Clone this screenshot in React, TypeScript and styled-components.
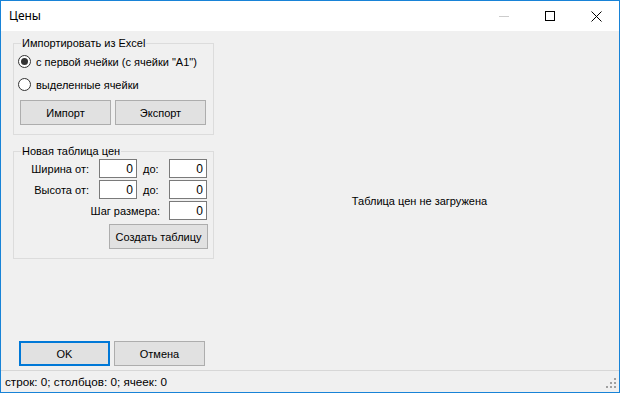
import React from "react";
import styled, { createGlobalStyle } from "styled-components";

const GlobalStyle = createGlobalStyle`
  html, body {
    margin: 0;
    padding: 0;
    background: #ffffff;
  }
  * {
    box-sizing: border-box;
  }
`;

const Window = styled.div`
  width: 620px;
  height: 393px;
  display: flex;
  flex-direction: column;
  border: 1px solid #1883d7;
  background: #f0f0f0;
  font-family: "Liberation Sans", Arial, sans-serif;
  font-size: 11px;
  color: #000;
`;

const TitleBar = styled.div`
  height: 30px;
  flex-shrink: 0;
  display: flex;
  align-items: center;
  background: #ffffff;
`;

const Caption = styled.div`
  flex: 1;
  padding-left: 8px;
  font-family: "Noto Sans", "Liberation Sans", sans-serif;
  font-size: 12px;
  line-height: 16px;
`;

const CaptionButton = styled.div`
  width: 46px;
  height: 30px;
  display: flex;
  align-items: center;
  justify-content: center;
`;

const Client = styled.div`
  flex: 1;
  display: flex;
  min-height: 0;
`;

const LeftColumn = styled.div`
  width: 219px;
  flex-shrink: 0;
  display: flex;
  flex-direction: column;
  padding: 12px 0 0 12px;
`;

const GroupBox = styled.div<{ $gap?: number }>`
  width: 201px;
  border: 1px solid #dcdcdc;
  display: flex;
  flex-direction: column;
  margin-top: ${({ $gap }) => $gap ?? 0}px;
`;

const GroupTitle = styled.div`
  align-self: flex-start;
  margin: -7px 0 0 7px;
  padding: 0 1px;
  line-height: 13px;
  background: #f0f0f0;
`;

const RadioRow = styled.label`
  height: 23px;
  display: flex;
  align-items: center;
  padding-left: 4px;
  gap: 5px;
`;

const RadioCircle = styled.span<{ $checked?: boolean }>`
  width: 13px;
  height: 13px;
  border-radius: 50%;
  border: 1px solid #333333;
  background: #ffffff;
  display: flex;
  align-items: center;
  justify-content: center;

  &::after {
    content: "";
    width: 7px;
    height: 7px;
    border-radius: 50%;
    background: ${({ $checked }) => ($checked ? "#333333" : "transparent")};
  }
`;

const ButtonRow = styled.div<{ $top?: number; $bottom?: number }>`
  display: flex;
  gap: 4px;
  padding-left: 6px;
  margin-top: ${({ $top }) => $top ?? 0}px;
  margin-bottom: ${({ $bottom }) => $bottom ?? 0}px;
`;

const Button = styled.button<{ $width?: number; $default?: boolean }>`
  width: ${({ $width }) => $width ?? 91}px;
  height: 25px;
  padding: 0;
  margin: 0;
  background: #e1e1e1;
  border: ${({ $default }) => ($default ? "2px solid #0078d7" : "1px solid #adadad")};
  font-family: "Liberation Sans", Arial, sans-serif;
  font-size: 11px;
  color: #000;
`;

const FieldGrid = styled.div`
  display: grid;
  grid-template-columns: 85px 38px 32px 38px;
  grid-auto-rows: 19px;
  row-gap: 2px;
  margin-top: 1px;
  align-items: center;
`;

const FieldLabel = styled.span<{ $span?: number; $right?: number }>`
  grid-column: ${({ $span }) => ($span ? `span ${$span}` : "auto")};
  text-align: ${({ $right }) => ($right !== undefined ? "right" : "left")};
  padding-right: ${({ $right }) => $right ?? 0}px;
  padding-left: ${({ $right }) => ($right !== undefined ? 0 : 6)}px;
  white-space: nowrap;
`;

const TextBox = styled.div`
  height: 19px;
  border: 1px solid #7a7a7a;
  background: #ffffff;
  display: flex;
  align-items: center;
  justify-content: flex-end;
  padding-right: 3px;
  font-size: 12px;
`;

const CreateRow = styled.div`
  display: flex;
  justify-content: flex-end;
  padding: 4px 5px 9px 0;
`;

const BottomButtons = styled(ButtonRow)`
  margin-top: auto;
`;

const RightPanel = styled.div`
  flex: 1;
  display: flex;
  align-items: center;
  justify-content: center;
  padding-top: 1px;
`;

const StatusBar = styled.div`
  height: 22px;
  flex-shrink: 0;
  display: flex;
  align-items: center;
  justify-content: space-between;
  border-top: 1px solid #d7d7d7;
  padding-left: 4px;
  font-size: 11.7px;
`;

const Grip = () => (
  <svg width="14" height="14" viewBox="0 0 14 14" style={{ alignSelf: "flex-end" }}>
    {[
      [9, 0],
      [5, 4],
      [9, 4],
      [1, 8],
      [5, 8],
      [9, 8],
    ].map(([x, y]) => (
      <rect key={`${x}-${y}`} x={x} y={y} width="2" height="2" fill="#a0a0a0" />
    ))}
  </svg>
);

export default function App() {
  return (
    <>
      <GlobalStyle />
      <Window>
        <TitleBar>
          <Caption>Цены</Caption>
          <CaptionButton>
            <svg width="10" height="10" viewBox="0 0 10 10">
              <line x1="0" y1="5.5" x2="10" y2="5.5" stroke="#cccccc" strokeWidth="1" />
            </svg>
          </CaptionButton>
          <CaptionButton>
            <svg width="10" height="10" viewBox="0 0 10 10">
              <rect x="0.5" y="0.5" width="9" height="9" fill="none" stroke="#000" strokeWidth="1" />
            </svg>
          </CaptionButton>
          <CaptionButton>
            <svg width="11" height="11" viewBox="0 0 11 11">
              <path d="M0.5 0.5 L10.5 10.5 M10.5 0.5 L0.5 10.5" stroke="#000" strokeWidth="1" />
            </svg>
          </CaptionButton>
        </TitleBar>
        <Client>
          <LeftColumn>
            <GroupBox>
              <GroupTitle>Импортировать из Excel</GroupTitle>
              <RadioRow>
                <RadioCircle $checked />
                с первой ячейки (с ячейки "A1")
              </RadioRow>
              <RadioRow>
                <RadioCircle />
                выделенные ячейки
              </RadioRow>
              <ButtonRow $top={4} $bottom={9}>
                <Button>Импорт</Button>
                <Button>Экспорт</Button>
              </ButtonRow>
            </GroupBox>
            <GroupBox $gap={16}>
              <GroupTitle>Новая таблица цен</GroupTitle>
              <FieldGrid>
                <FieldLabel $right={10}>Ширина от:</FieldLabel>
                <TextBox>0</TextBox>
                <FieldLabel>до:</FieldLabel>
                <TextBox>0</TextBox>
                <FieldLabel $right={10}>Высота от:</FieldLabel>
                <TextBox>0</TextBox>
                <FieldLabel>до:</FieldLabel>
                <TextBox>0</TextBox>
                <FieldLabel $span={3} $right={9}>Шаг размера:</FieldLabel>
                <TextBox>0</TextBox>
              </FieldGrid>
              <CreateRow>
                <Button $width={99}>Создать таблицу</Button>
              </CreateRow>
            </GroupBox>
            <BottomButtons $bottom={4}>
              <Button $default>OK</Button>
              <Button>Отмена</Button>
            </BottomButtons>
          </LeftColumn>
          <RightPanel>Таблица цен не загружена</RightPanel>
        </Client>
        <StatusBar>
          <span>строк: 0; столбцов: 0; ячеек: 0</span>
          <Grip />
        </StatusBar>
      </Window>
    </>
  );
}
